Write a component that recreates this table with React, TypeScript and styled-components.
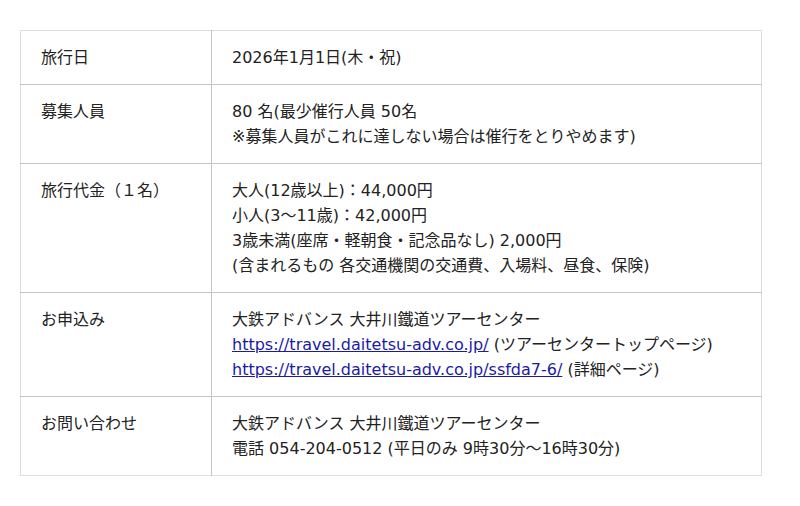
import React from "react";
import styled, { createGlobalStyle } from "styled-components";

const Global = createGlobalStyle`
  html, body { margin: 0; padding: 0; background: #fff; }
  body {
    font-family: "DejaVu Sans", "Noto Sans CJK JP", sans-serif;
    color: #222;
  }
`;

const Page = styled.div`
  padding: 30px 0 0 20px;
`;

const Table = styled.table`
  width: 742px;
  table-layout: fixed;
  border-collapse: collapse;
  border: 1px solid #ddd;
  font-size: 16px;
  line-height: 25px;
`;

const Row = styled.tr`
  border-top: 1px solid #c4c4c4;
  &:first-child { border-top: 1px solid #ddd; }
`;

const Label = styled.th`
  width: 150px;
  padding: 14px 20px;
  text-align: left;
  font-weight: normal;
  vertical-align: top;
  border-right: 1px solid #c4c4c4;
`;

const Value = styled.td`
  padding: 14px 20px;
  vertical-align: top;
`;

const Line = styled.div`
  white-space: nowrap;
`;

const Link = styled.a`
  color: #1a1aa6;
  text-decoration: underline;
`;

export default function App() {
  return (
    <>
      <Global />
      <Page>
        <Table>
          <tbody>
            <Row>
              <Label>旅行日</Label>
              <Value>2026年1月1日(木・祝)</Value>
            </Row>
            <Row>
              <Label>募集人員</Label>
              <Value>
                <Line>80 名(最少催行人員 50名</Line>
                <Line>※募集人員がこれに達しない場合は催行をとりやめます)</Line>
              </Value>
            </Row>
            <Row>
              <Label>旅行代金（１名）</Label>
              <Value>
                <Line>大人(12歳以上)：44,000円</Line>
                <Line>小人(3～11歳)：42,000円</Line>
                <Line>3歳未満(座席・軽朝食・記念品なし) 2,000円</Line>
                <Line>(含まれるもの 各交通機関の交通費、入場料、昼食、保険)</Line>
              </Value>
            </Row>
            <Row>
              <Label>お申込み</Label>
              <Value>
                <Line>大鉄アドバンス 大井川鐵道ツアーセンター</Line>
                <Line>
                  <Link href="#">https://travel.daitetsu-adv.co.jp/</Link> (ツアーセンタートップページ)
                </Line>
                <Line>
                  <Link href="#">https://travel.daitetsu-adv.co.jp/ssfda7-6/</Link> (詳細ページ)
                </Line>
              </Value>
            </Row>
            <Row>
              <Label>お問い合わせ</Label>
              <Value>
                <Line>大鉄アドバンス 大井川鐵道ツアーセンター</Line>
                <Line>電話 054-204-0512 (平日のみ 9時30分～16時30分)</Line>
              </Value>
            </Row>
          </tbody>
        </Table>
      </Page>
    </>
  );
}
